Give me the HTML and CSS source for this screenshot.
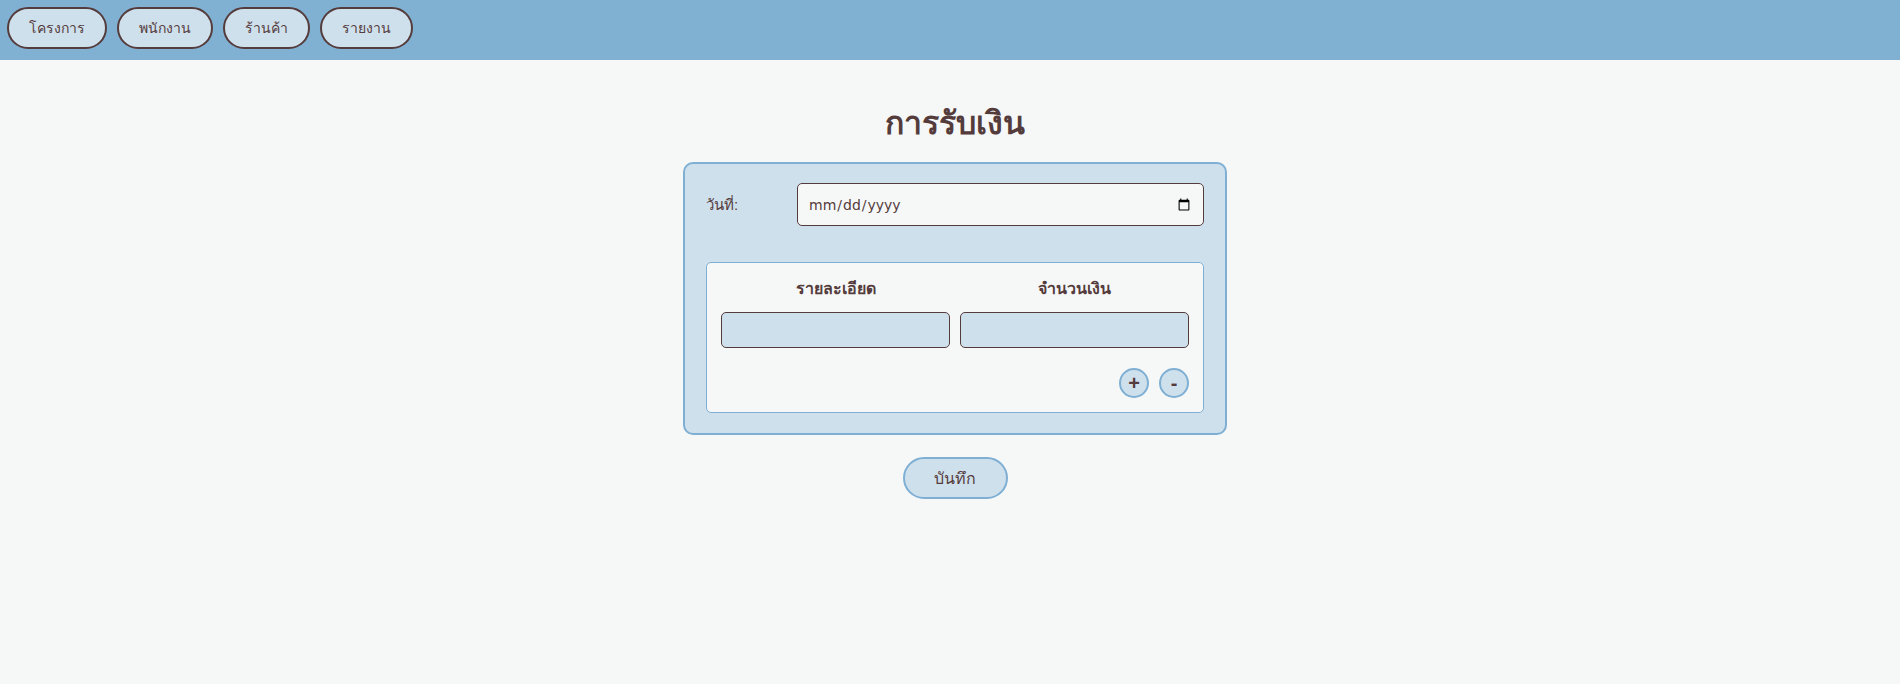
FILE: index.html
```html
<!DOCTYPE html>
<html lang="th">
<head>
<meta charset="utf-8">
<title>การรับเงิน</title>
<link rel="stylesheet" href="styles.css">
</head>
<body>
<nav class="topnav">
  <button class="nav-btn">โครงการ</button>
  <button class="nav-btn">พนักงาน</button>
  <button class="nav-btn">ร้านค้า</button>
  <button class="nav-btn">รายงาน</button>
</nav>
<main class="page">
  <h1 class="title">การรับเงิน</h1>
  <form class="card">
    <div class="date-row">
      <label class="date-label" for="d">วันที่:</label>
      <input class="date-input" id="d" type="date">
    </div>
    <div class="items">
      <div class="items-head">
        <div class="col-title">รายละเอียด</div>
        <div class="col-title">จำนวนเงิน</div>
      </div>
      <div class="items-row">
        <input class="cell-input" type="text">
        <input class="cell-input" type="text">
      </div>
      <div class="items-actions">
        <button type="button" class="circle-btn">+</button>
        <button type="button" class="circle-btn">-</button>
      </div>
    </div>
  </form>
  <button class="save-btn">บันทึก</button>
</main>
</body>
</html>
```
FILE: styles.css
```css
html, body {
  margin: 0;
  padding: 0;
}
body {
  background: #f6f8f8;
  color: #553c3c;
  font-family: sans-serif;
  font-size: 16px;
}
.topnav {
  height: 60px;
  box-sizing: border-box;
  background: #80b0d2;
  padding: 7px;
  display: flex;
  align-items: flex-start;
  gap: 10px;
}
.nav-btn {
  height: 42px;
  padding: 0 20px;
  border: 2px solid #553c3c;
  border-radius: 21px;
  background: #cfe0ed;
  color: #553c3c;
  font-family: sans-serif;
  font-size: 14px;
}
.page {
  display: flex;
  flex-direction: column;
  align-items: center;
  padding-left: 10px;
}
.title {
  font-size: 32px;
  font-weight: bold;
  margin: 44px 0 20px;
  line-height: 1.2;
}
.card {
  width: 544px;
  box-sizing: border-box;
  background: #cfe0ed;
  border: 2px solid #7fafd3;
  border-radius: 10px;
  padding: 19px 21px 20px;
}
.date-row {
  display: flex;
  align-items: center;
  margin-bottom: 36px;
}
.date-label {
  width: 91px;
  font-size: 15px;
}
.date-input {
  flex: 1;
  height: 43px;
  box-sizing: border-box;
  border: 1px solid #553c3c;
  border-radius: 5px;
  background: #f6f8f8;
  color: #553c3c;
  padding: 0 10px;
  font-family: "DejaVu Sans", sans-serif;
  font-size: 14px;
}
.items {
  background: #f6f8f8;
  border: 1px solid #7fafd3;
  border-radius: 5px;
  padding: 14px;
}
.items-head, .items-row {
  display: grid;
  grid-template-columns: 1fr 1fr;
  column-gap: 10px;
}
.col-title {
  text-align: center;
  font-weight: bold;
  line-height: 24px;
  margin-bottom: 11px;
}
.cell-input {
  height: 36px;
  box-sizing: border-box;
  border: 1px solid #553c3c;
  border-radius: 5px;
  background: #cfe0ed;
  min-width: 0;
}
.items-actions {
  display: flex;
  justify-content: flex-end;
  gap: 10px;
  margin-top: 20px;
}
.circle-btn {
  width: 30px;
  height: 30px;
  padding: 0;
  border: 2px solid #7fafd3;
  border-radius: 50%;
  background: #cfe0ed;
  color: #553c3c;
  font-size: 20px;
  font-weight: bold;
  line-height: 1;
}
.save-btn {
  margin-top: 22px;
  width: 105px;
  height: 42px;
  border: 2px solid #7fafd3;
  border-radius: 21px;
  background: #cfe0ed;
  color: #553c3c;
  font-family: sans-serif;
  font-size: 16px;
}
```
